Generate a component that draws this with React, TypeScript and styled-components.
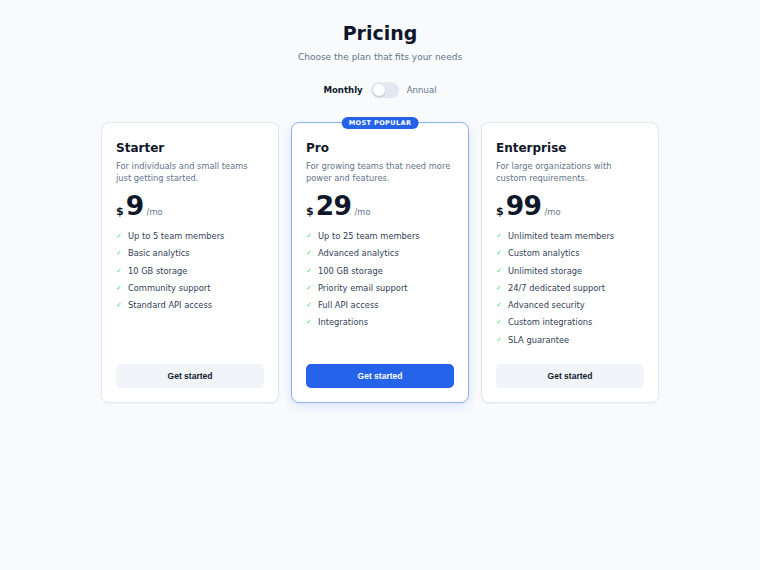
import React, { useState } from 'react';
import styled, { createGlobalStyle, css } from 'styled-components';

const GlobalStyle = createGlobalStyle`
  html, body {
    margin: 0;
    padding: 0;
    background: #f8fafc;
  }
  body {
    font-family: "DejaVu Sans", sans-serif;
    color: #0f172a;
  }
`;

const Page = styled.div`
  min-height: 570px;
  display: flex;
  flex-direction: column;
  align-items: center;
  padding-top: 21px;
  box-sizing: border-box;
`;

const Title = styled.h1`
  margin: 0;
  font-size: 19px;
  font-weight: 700;
  line-height: 24px;
  color: #0f172a;
`;

const Subtitle = styled.p`
  margin: 5px 0 0;
  font-size: 9px;
  line-height: 14px;
  color: #64748b;
`;

const ToggleRow = styled.div`
  display: flex;
  align-items: center;
  gap: 8px;
  margin-top: 17px;
  height: 18px;
`;

const ToggleLabel = styled.span<{ $active: boolean }>`
  font-size: 8.6px;
  font-weight: ${(p) => (p.$active ? 700 : 400)};
  color: ${(p) => (p.$active ? '#0f172a' : '#64748b')};
`;

const Switch = styled.button<{ $on: boolean }>`
  position: relative;
  width: 28px;
  height: 16px;
  border: none;
  padding: 0;
  border-radius: 999px;
  background: ${(p) => (p.$on ? '#2563eb' : '#e2e8f0')};
  cursor: pointer;

  &::after {
    content: '';
    position: absolute;
    top: 2px;
    left: ${(p) => (p.$on ? '14px' : '2px')};
    width: 12px;
    height: 12px;
    border-radius: 50%;
    background: #fff;
    box-shadow: 0 1px 2px rgba(15, 23, 42, 0.2);
  }
`;

const Grid = styled.div`
  display: grid;
  grid-template-columns: repeat(3, 178px);
  gap: 12px;
  margin-top: 23px;
`;

const Card = styled.div<{ $featured: boolean }>`
  position: relative;
  display: flex;
  flex-direction: column;
  height: 281px;
  box-sizing: border-box;
  padding: 16px 14px 14px;
  background: #fff;
  border: 1px solid #e2e8f0;
  border-radius: 8px;
  box-shadow: 0 1px 2px rgba(15, 23, 42, 0.04);

  ${(p) =>
    p.$featured &&
    css`
      border-color: #8fb0f3;
      box-shadow: 0 4px 10px rgba(37, 99, 235, 0.12);
    `}
`;

const Badge = styled.span`
  position: absolute;
  top: -6px;
  left: 50%;
  transform: translateX(-50%);
  background: #2563eb;
  color: #fff;
  font-size: 6.5px;
  font-weight: 700;
  letter-spacing: 0.4px;
  line-height: 12px;
  padding: 0 7px;
  border-radius: 999px;
  white-space: nowrap;
`;

const PlanName = styled.h2`
  margin: 0;
  font-size: 12px;
  font-weight: 700;
  line-height: 18px;
  color: #0f172a;
`;

const Desc = styled.p`
  margin: 3px 0 0;
  font-size: 8.3px;
  line-height: 12px;
  color: #64748b;
`;

const PriceRow = styled.div`
  display: flex;
  align-items: baseline;
  margin-top: 7px;
`;

const Currency = styled.span`
  font-size: 11px;
  font-weight: 700;
  margin-right: 2px;
`;

const Amount = styled.span`
  font-size: 26.5px;
  font-weight: 700;
  line-height: 30px;
  letter-spacing: -0.5px;
`;

const Per = styled.span`
  font-size: 8.3px;
  color: #64748b;
  margin-left: 3px;
`;

const Features = styled.ul`
  list-style: none;
  margin: 9px 0 0;
  padding: 0;
  display: flex;
  flex-direction: column;
  gap: 5.25px;
`;

const Feature = styled.li`
  display: flex;
  align-items: center;
  gap: 6px;
  font-size: 8.3px;
  line-height: 12px;
  color: #334155;
`;

const Check = styled.span`
  color: #4ade80;
  font-size: 7px;
  width: 6px;
`;

const CtaButton = styled.button<{ $primary: boolean }>`
  margin-top: auto;
  height: 24px;
  border: none;
  border-radius: 5px;
  font-family: "Liberation Sans", Arial, sans-serif;
  font-size: 8.5px;
  font-weight: 700;
  cursor: pointer;
  background: ${(p) => (p.$primary ? '#2563eb' : '#f1f5f9')};
  color: ${(p) => (p.$primary ? '#fff' : '#0f172a')};
`;

type Plan = {
  name: string;
  desc: string;
  price: number;
  features: string[];
  featured?: boolean;
};

const plans: Plan[] = [
  {
    name: 'Starter',
    desc: 'For individuals and small teams just getting started.',
    price: 9,
    features: [
      'Up to 5 team members',
      'Basic analytics',
      '10 GB storage',
      'Community support',
      'Standard API access',
    ],
  },
  {
    name: 'Pro',
    desc: 'For growing teams that need more power and features.',
    price: 29,
    featured: true,
    features: [
      'Up to 25 team members',
      'Advanced analytics',
      '100 GB storage',
      'Priority email support',
      'Full API access',
      'Integrations',
    ],
  },
  {
    name: 'Enterprise',
    desc: 'For large organizations with custom requirements.',
    price: 99,
    features: [
      'Unlimited team members',
      'Custom analytics',
      'Unlimited storage',
      '24/7 dedicated support',
      'Advanced security',
      'Custom integrations',
      'SLA guarantee',
    ],
  },
];

export default function App() {
  const [annual, setAnnual] = useState(false);

  return (
    <>
      <GlobalStyle />
      <Page>
        <Title>Pricing</Title>
        <Subtitle>Choose the plan that fits your needs</Subtitle>

        <ToggleRow>
          <ToggleLabel $active={!annual}>Monthly</ToggleLabel>
          <Switch $on={annual} onClick={() => setAnnual(!annual)} aria-label="Toggle billing" />
          <ToggleLabel $active={annual}>Annual</ToggleLabel>
        </ToggleRow>

        <Grid>
          {plans.map((plan) => (
            <Card key={plan.name} $featured={!!plan.featured}>
              {plan.featured && <Badge>MOST POPULAR</Badge>}
              <PlanName>{plan.name}</PlanName>
              <Desc>{plan.desc}</Desc>
              <PriceRow>
                <Currency>$</Currency>
                <Amount>{plan.price}</Amount>
                <Per>/mo</Per>
              </PriceRow>
              <Features>
                {plan.features.map((f) => (
                  <Feature key={f}>
                    <Check>✓</Check>
                    {f}
                  </Feature>
                ))}
              </Features>
              <CtaButton $primary={!!plan.featured}>Get started</CtaButton>
            </Card>
          ))}
        </Grid>
      </Page>
    </>
  );
}
